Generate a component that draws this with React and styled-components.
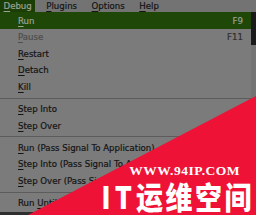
import React from 'react';
import styled, { createGlobalStyle } from 'styled-components';

const GlobalStyle = createGlobalStyle`
    html, body {
        margin: 0;
        padding: 0;
        background: #2b2b2b;
    }
`

const Screen = styled.div`
    position: relative;
    width: 256px;
    height: 215px;
    overflow: hidden;
    display: flex;
    flex-direction: column;
    background: #2b2b2b;
    font-family: "DejaVu Sans", "Liberation Sans", sans-serif;
    font-size: 8.6px;
    color: #141414;
    -webkit-text-stroke: 0.2px currentColor;
`

const MenuBar = styled.div`
    display: flex;
    align-items: stretch;
    gap: 7.5px;
    height: 12.4px;
    flex-shrink: 0;
    background: #737373;
`

const BarItem = styled.div`
    display: flex;
    align-items: center;
    padding: 0 3.5px;
    background: ${p => (p.$open ? '#1b3e06' : 'transparent')};
    color: ${p => (p.$open ? '#9da294' : '#141414')};
`

const Body = styled.div`
    display: flex;
    flex: 1;
    min-height: 0;
`

const Dropdown = styled.div`
    width: 251px;
    flex-shrink: 0;
    display: flex;
    flex-direction: column;
    background: #7b7b7b;
`

const Backdrop = styled.div`
    flex: 1;
    display: flex;
    flex-direction: column;
`

const BackdropTop = styled.div`
    height: 33px;
    background: #1a1a1a;
`

const BackdropRest = styled.div`
    flex: 1;
    background: #747474;
`

const Item = styled.div`
    display: flex;
    align-items: center;
    justify-content: space-between;
    height: 16.6px;
    padding: 0 8px 0 18px;
    white-space: nowrap;
    background: ${p => (p.$active ? '#1f4808' : 'transparent')};
    color: ${p => (p.$active ? '#9da294' : p.$disabled ? '#4d4d4d' : '#141414')};
`

const Accel = styled.span`
    color: ${p => (p.$active ? '#9da294' : '#2e2e2e')};
`

const Separator = styled.div`
    height: 5.5px;
    display: flex;
    flex-direction: column;
    justify-content: center;

    &::before {
        content: '';
        height: 1px;
        background: #5c5c5c;
    }
`

const Footer = styled.div`
    height: 3.5px;
    flex-shrink: 0;
    background: #2f2f2f;
`

const Key = styled.span`
    text-decoration: underline;
    text-underline-offset: 1.5px;
`

const Watermark = styled.div`
    position: absolute;
    inset: 0;
    background: #ee1236;
    clip-path: polygon(28px 215px, 256px 96px, 256px 215px);
    display: flex;
    flex-direction: column;
    align-items: flex-end;
    justify-content: flex-end;
    padding: 0 2px 1px 0;
    box-sizing: border-box;
    -webkit-text-stroke: 0;
`

const MarkText = styled.div`
    display: flex;
    flex-direction: column;
    align-items: center;
    color: #fff;
`

const Domain = styled.div`
    font-family: "Liberation Serif", serif;
    font-weight: bold;
    font-size: 13.5px;
    line-height: 13px;
    letter-spacing: 0.5px;
    margin: 0 0 7px 14px;
`

const Brand = styled.div`
    font-family: "Noto Sans CJK SC", sans-serif;
    font-weight: 900;
    font-size: 27px;
    line-height: 30px;
    letter-spacing: 2.5px;
    transform: scaleY(1.15);
    transform-origin: bottom;
`

const Latin = styled.span`
    letter-spacing: 4px;
`

const items = [
    { key: 'R', rest: 'un', accel: 'F9', active: true },
    { key: 'P', rest: 'ause', accel: 'F11', disabled: true },
    { key: 'R', rest: 'estart' },
    { key: 'D', rest: 'etach' },
    { key: 'K', rest: 'ill' },
    'sep',
    { key: 'S', rest: 'tep Into' },
    { key: 'S', rest: 'tep Over' },
    'sep',
    { key: 'R', rest: 'un (Pass Signal To Application)' },
    { key: 'S', rest: 'tep Into (Pass Signal To Application)' },
    { key: 'S', rest: 'tep Over (Pass Signal To Application)' },
    'sep',
    { pre: 'Run ', key: 'U', rest: 'ntil Return' },
];

const bar = [
    { key: 'D', rest: 'ebug', open: true },
    { key: 'P', rest: 'lugins' },
    { key: 'O', rest: 'ptions' },
    { key: 'H', rest: 'elp' },
];

export default function App() {
    return (
        <Screen>
            <GlobalStyle />
            <MenuBar>
                {bar.map(b => (
                    <BarItem key={b.rest} $open={b.open}>
                        <span><Key>{b.key}</Key>{b.rest}</span>
                    </BarItem>
                ))}
            </MenuBar>
            <Body>
                <Dropdown>
                    {items.map((it, i) =>
                        it === 'sep' ? (
                            <Separator key={i} />
                        ) : (
                            <Item key={i} $active={it.active} $disabled={it.disabled}>
                                <span>{it.pre}<Key>{it.key}</Key>{it.rest}</span>
                                {it.accel && <Accel $active={it.active}>{it.accel}</Accel>}
                            </Item>
                        )
                    )}
                </Dropdown>
                <Backdrop>
                    <BackdropTop />
                    <BackdropRest />
                </Backdrop>
            </Body>
            <Footer />
            <Watermark>
                <MarkText>
                    <Domain>WWW.94IP.COM</Domain>
                    <Brand><Latin>IT</Latin>运维空间</Brand>
                </MarkText>
            </Watermark>
        </Screen>
    );
}
